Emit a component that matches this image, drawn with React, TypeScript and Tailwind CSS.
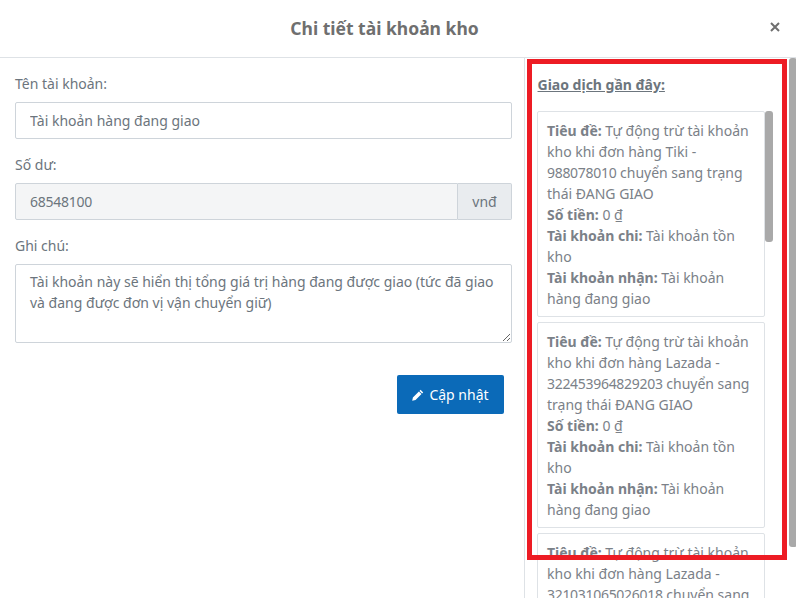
import React from "react";

const transactions = [
  { before: "Tự động trừ tài khoản kho khi đơn hàng Tiki - ", code: "988078010" },
  { before: "Tự động trừ tài khoản kho khi đơn hàng Lazada - ", code: "322453964829203" },
  { before: "Tự động trừ tài khoản kho khi đơn hàng Lazada - ", code: "321031065026018" },
];

const TransactionCard = ({ before, code }: { before: string; code: string }) => (
  <div className="w-[228px] shrink-0 rounded-[2px] border border-[#dee2e6] pb-[7px] pl-[9px] pr-[4px] pt-[8px] text-[14px] leading-[21px] text-[#7b8188]">
    <div>
      <b className="font-bold">Tiêu đề:</b> {before}
      <span className="tracking-[-0.3px]">{code}</span> chuyển sang trạng thái ĐANG GIAO
    </div>
    <div>
      <b className="font-bold">Số tiền:</b> 0 ₫
    </div>
    <div>
      <b className="font-bold">Tài khoản chi:</b> Tài khoản tồn kho
    </div>
    <div>
      <b className="font-bold">Tài khoản nhận:</b> Tài khoản hàng đang giao
    </div>
  </div>
);

const App = () => {
  return (
    <div className="relative flex h-[598px] w-[796px] flex-col overflow-hidden bg-white font-['Noto_Sans','Open_Sans',sans-serif] text-[14px] text-[#6c757d]">
      <header className="relative flex h-[58px] shrink-0 items-center justify-center border-b border-[#dee2e6] pr-[27px]">
        <h1 className="text-[17.5px] font-bold text-[#6f6f6f]">Chi tiết tài khoản kho</h1>
        <button className="absolute right-[13px] top-[19px] text-[#6f6f6f]">
          <svg className="h-[16px] w-[16px]" viewBox="0 0 16 16" fill="none" stroke="currentColor" strokeWidth={2}>
            <path d="M4 4l8 8M12 4l-8 8" />
          </svg>
        </button>
      </header>

      <div className="flex min-h-0 flex-1">
        <div className="w-[525px] shrink-0 border-r border-[#dee2e6] pl-[15px] pr-[12px] pt-[15px]">
          <label className="block h-[21px] leading-[21px]">Tên tài khoản:</label>
          <input
            readOnly
            value="Tài khoản hàng đang giao"
            className="mt-[8px] block h-[37px] w-full rounded-[2px] border border-[#ced4da] px-[14px] text-[#6c757d] outline-none"
          />

          <label className="mt-[15px] block h-[21px] leading-[21px]">Số dư:</label>
          <div className="mt-[8px] flex h-[37px]">
            <input
              readOnly
              value="68548100"
              className="min-w-0 flex-1 rounded-l-[2px] border border-[#ced4da] bg-[#f4f5f6] px-[14px] tracking-[-0.25px] text-[#6c757d] outline-none"
            />
            <span className="flex w-[54px] items-center justify-center rounded-r-[2px] border border-l-0 border-[#ced4da] bg-[#e9ecef]">
              vnđ
            </span>
          </div>

          <label className="mt-[15px] block h-[21px] leading-[21px]">Ghi chú:</label>
          <textarea
            readOnly
            value="Tài khoản này sẽ hiển thị tổng giá trị hàng đang được giao (tức đã giao và đang được đơn vị vận chuyển giữ)"
            className="mt-[8px] block h-[79px] w-full rounded-[2px] border border-[#ced4da] px-[14px] py-[6px] leading-[21px] text-[#6c757d] outline-none"
          />

          <div className="mt-[32px] flex justify-end pr-[8px]">
            <button className="flex h-[39px] w-[107px] items-center justify-center gap-[5px] rounded-[2px] bg-[#0b6ab8] text-white">
              <svg className="h-[12px] w-[12px]" viewBox="0 0 12 12" fill="currentColor">
                <path d="M8.6.8l2.6 2.6-1.1 1.1-2.6-2.6zM6.9 2.5l2.6 2.6-6 6-3.3.7.7-3.3z" />
              </svg>
              Cập nhật
            </button>
          </div>
        </div>

        <div className="min-w-0 flex-1 pl-[12px] pt-[16px]">
          <div className="h-[21px] pl-[0.5px] font-bold leading-[21px] underline">Giao dịch gần đây:</div>
          <div className="mt-[16px] flex flex-col gap-[5px]">
            {transactions.map((item) => (
              <TransactionCard key={item.code} before={item.before} code={item.code} />
            ))}
          </div>
        </div>
      </div>

      {/* scrollbar thumbs */}
      <div className="absolute left-[765px] top-[111px] h-[131px] w-[8px] rounded-[3px] bg-[#a9a9a9]" />
      <div className="absolute left-[789px] top-[58px] h-[489px] w-[8px] rounded-[3px] bg-[#a9a9a9]" />

      {/* red annotation box */}
      <div className="pointer-events-none absolute left-[527px] top-[59px] h-[501px] w-[260px] border-[5px] border-[#ed1c24]" />
    </div>
  );
};

export default App;
